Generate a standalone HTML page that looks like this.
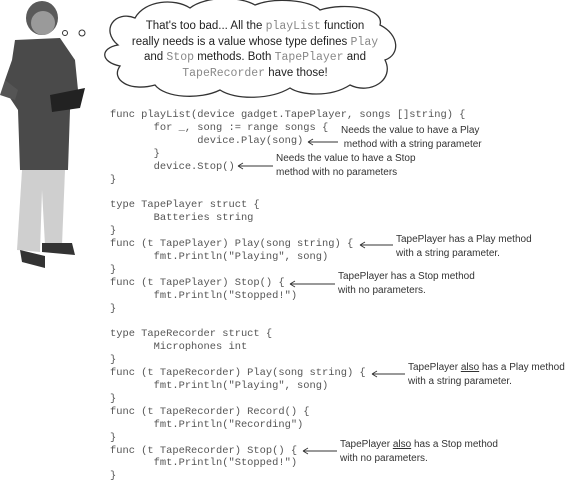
<!DOCTYPE html>
<html><head><style>
body{margin:0;width:566px;height:481px;background:#fff;position:relative;overflow:hidden;font-family:"Liberation Sans",sans-serif}
.c{position:absolute;left:110px;top:109px;font-family:"Liberation Mono",monospace;font-size:10.4px;line-height:12.9px;color:#555;white-space:pre;margin:0}
.n{position:absolute;font-family:"Liberation Sans",sans-serif;font-size:10px;line-height:14px;color:#333;white-space:nowrap}
.b{position:absolute;left:125px;top:19px;width:260px;text-align:center;font-size:11.5px;line-height:14.7px;color:#222}
.b code{font-family:"Liberation Mono",monospace;color:#888;font-size:11.5px}
</style></head><body>
<svg width="566" height="481" style="position:absolute;left:0;top:0">
<path d="M118 45 C100 30,115 10,135 18 C145 0,175 -2,190 8 C205 -4,240 -4,255 5 C275 -3,310 0,320 10 C345 2,385 8,380 25 C400 35,400 55,385 60 C395 80,370 95,350 85 C330 98,300 95,290 88 C270 100,235 100,220 90 C200 100,165 98,155 85 C130 92,110 80,120 66 C100 62,100 48,118 45Z" fill="#fff" stroke="#333" stroke-width="1.3"/>
<circle cx="65" cy="33" r="2.5" fill="none" stroke="#333"/>
<circle cx="82" cy="33" r="3" fill="none" stroke="#333"/>
<path d="M22 170 L17 250 L40 252 L42 190 L45 245 L62 245 L65 170Z" fill="#cfcfcf"/>
<path d="M20 250 L22 262 L45 268 L45 256Z" fill="#333"/>
<path d="M42 243 L42 252 L75 255 L72 243Z" fill="#333"/>
<path d="M15 40 L60 38 L75 60 L78 90 L70 110 L68 170 L20 170 L18 110 L8 95 L5 80 L12 60Z" fill="#4a4a4a"/>
<path d="M5 80 L18 90 L15 100 L0 95Z" fill="#555"/>
<ellipse cx="42" cy="18" rx="16" ry="17" fill="#5a5a5a"/>
<ellipse cx="43" cy="23" rx="12" ry="12" fill="#9a9a9a"/>
<path d="M50 95 L85 88 L80 108 L52 112Z" fill="#222"/>
<g stroke="#333" stroke-width="0.9" fill="none">
<path d="M308 142 H338 M308 142 l5 -3 M308 142 l5 3"/>
<path d="M238 166 H273 M238 166 l5 -3 M238 166 l5 3"/>
<path d="M360 245 H393 M360 245 l5 -3 M360 245 l5 3"/>
<path d="M290 284 H335 M290 284 l5 -3 M290 284 l5 3"/>
<path d="M372 374 H405 M372 374 l5 -3 M372 374 l5 3"/>
<path d="M303 451 H337 M303 451 l5 -3 M303 451 l5 3"/>
</g>
</svg>
<div class="b">That's too bad... All the <code>playList</code> function<br>really needs is a value whose type defines <code>Play</code><br>and <code>Stop</code> methods. Both <code>TapePlayer</code> and<br><code>TapeRecorder</code> have those!</div>
<pre class="c">func playList(device gadget.TapePlayer, songs []string) {
       for _, song := range songs {
              device.Play(song)
       }
       device.Stop()
}

type TapePlayer struct {
       Batteries string
}
func (t TapePlayer) Play(song string) {
       fmt.Println("Playing", song)
}
func (t TapePlayer) Stop() {
       fmt.Println("Stopped!")
}

type TapeRecorder struct {
       Microphones int
}
func (t TapeRecorder) Play(song string) {
       fmt.Println("Playing", song)
}
func (t TapeRecorder) Record() {
       fmt.Println("Recording")
}
func (t TapeRecorder) Stop() {
       fmt.Println("Stopped!")
}</pre>
<div class="n" style="left:341px;top:124px">Needs the value to have a Play<br>&nbsp;method with a string parameter</div>
<div class="n" style="left:276px;top:152px">Needs the value to have a Stop<br>method with no parameters</div>
<div class="n" style="left:396px;top:233px">TapePlayer has a Play method<br>with a string parameter.</div>
<div class="n" style="left:338px;top:270px">TapePlayer has a Stop method<br>with no parameters.</div>
<div class="n" style="left:408px;top:361px">TapePlayer <u>also</u> has a Play method<br>with a string parameter.</div>
<div class="n" style="left:340px;top:438px">TapePlayer <u>also</u> has a Stop method<br>with no parameters.</div>
</body></html>
